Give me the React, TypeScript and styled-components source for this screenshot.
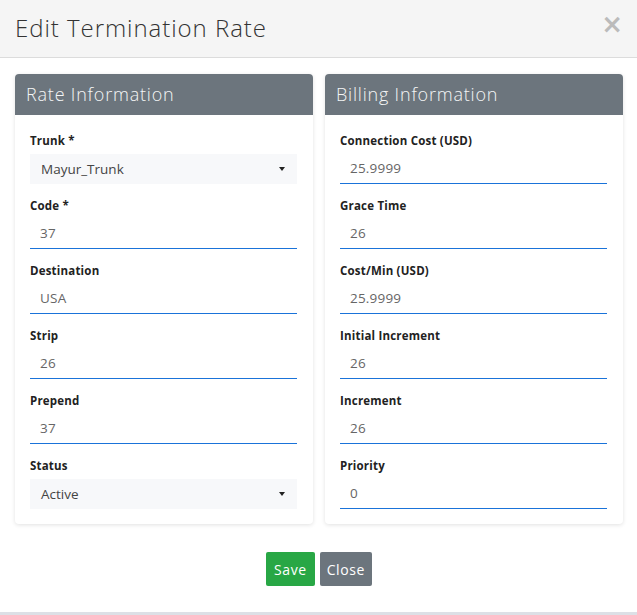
import React from "react";
import styled, { createGlobalStyle } from "styled-components";

const Global = createGlobalStyle`
  html, body { margin: 0; padding: 0; background: #fff; }
  body { font-family: "Open Sans", "Liberation Sans", sans-serif; }
  * { box-sizing: border-box; }
`;

const Modal = styled.div`
  width: 637px;
  height: 615px;
  background: #fff;
  display: flex;
  flex-direction: column;
  border-bottom: 3px solid #dde0e6;
`;

const Header = styled.div`
  height: 58px;
  background: #f5f5f5;
  border-bottom: 1px solid #dcdcdc;
  display: flex;
  align-items: center;
  justify-content: space-between;
  padding: 0 15px 2px 15px;
`;

const Title = styled.h4`
  margin: 0;
  font-size: 24px;
  font-weight: 300;
  color: #333;
  letter-spacing: 0.95px;
`;

const CloseX = styled.span`
  font-size: 26px;
  font-weight: 700;
  color: #bbb;
  line-height: 1;
  margin-top: -8px;
  margin-right: -1px;
  font-family: "DejaVu Sans", sans-serif;
`;

const Body = styled.div`
  padding: 16px 14px 0 15px;
  display: grid;
  grid-template-columns: 298px 298px;
  column-gap: 12px;
`;

const Card = styled.div`
  background: #fff;
  border-radius: 4px;
  box-shadow: 0 1px 4px rgba(0, 0, 0, 0.12);
  overflow: hidden;
`;

const CardHeader = styled.div`
  height: 41px;
  background: #6c757d;
  color: #f4f5f6;
  font-size: 18px;
  font-weight: 300;
  letter-spacing: 0.8px;
  display: flex;
  align-items: center;
  padding: 0 11px 1px;
`;

const CardBody = styled.div`
  padding: 17px 16px 15px 15px;
  display: flex;
  flex-direction: column;
`;

const Group = styled.div`
  display: flex;
  flex-direction: column;
  margin-bottom: 13px;
  &:last-child { margin-bottom: 0; }
`;

const Label = styled.label`
  font-size: 11.5px;
  font-weight: 700;
  color: #222;
  line-height: 18px;
  margin-bottom: 4px;
  letter-spacing: 0.2px;
`;

const Input = styled.div`
  height: 30px;
  border-bottom: 1px solid #1a73d9;
  font-size: 13.5px;
  color: #666;
  display: flex;
  align-items: center;
  padding: 0 10px 1px;
  letter-spacing: 0.2px;
`;

const Select = styled.div`
  height: 30px;
  background: #f7f8fa;
  font-size: 13.5px;
  color: #444;
  display: flex;
  align-items: center;
  justify-content: space-between;
  padding: 0 11px 0 11px;
`;

const Caret = styled.span`
  width: 0;
  height: 0;
  border-left: 3.5px solid transparent;
  border-right: 3.5px solid transparent;
  border-top: 4px solid #222;
  margin-right: 1px;
`;

const Footer = styled.div`
  display: flex;
  justify-content: center;
  gap: 5px;
  padding-top: 28px;
  padding-left: 1px;
`;

const Button = styled.button<{ $variant: "save" | "close" }>`
  height: 34px;
  border: none;
  border-radius: 2px;
  padding: 0 ${(p) => (p.$variant === "save" ? "8px" : "7px")};
  font-family: inherit;
  font-size: 14px;
  letter-spacing: 0.6px;
  color: #fff;
  background: ${(p) => (p.$variant === "save" ? "#28a745" : "#6c757d")};
`;

type Field = { label: string; value: string; select?: boolean };

const rate: Field[] = [
  { label: "Trunk *", value: "Mayur_Trunk", select: true },
  { label: "Code *", value: "37" },
  { label: "Destination", value: "USA" },
  { label: "Strip", value: "26" },
  { label: "Prepend", value: "37" },
  { label: "Status", value: "Active", select: true },
];

const billing: Field[] = [
  { label: "Connection Cost (USD)", value: "25.9999" },
  { label: "Grace Time", value: "26" },
  { label: "Cost/Min (USD)", value: "25.9999" },
  { label: "Initial Increment", value: "26" },
  { label: "Increment", value: "26" },
  { label: "Priority", value: "0" },
];

const Fields = ({ items }: { items: Field[] }) => (
  <CardBody>
    {items.map((f) => (
      <Group key={f.label}>
        <Label>{f.label}</Label>
        {f.select ? (
          <Select>
            <span>{f.value}</span>
            <Caret />
          </Select>
        ) : (
          <Input>{f.value}</Input>
        )}
      </Group>
    ))}
  </CardBody>
);

export default function App() {
  return (
    <Modal>
      <Global />
      <Header>
        <Title>Edit Termination Rate</Title>
        <CloseX>×</CloseX>
      </Header>
      <Body>
        <Card>
          <CardHeader>Rate Information</CardHeader>
          <Fields items={rate} />
        </Card>
        <Card>
          <CardHeader>Billing Information</CardHeader>
          <Fields items={billing} />
        </Card>
      </Body>
      <Footer>
        <Button $variant="save">Save</Button>
        <Button $variant="close">Close</Button>
      </Footer>
    </Modal>
  );
}
